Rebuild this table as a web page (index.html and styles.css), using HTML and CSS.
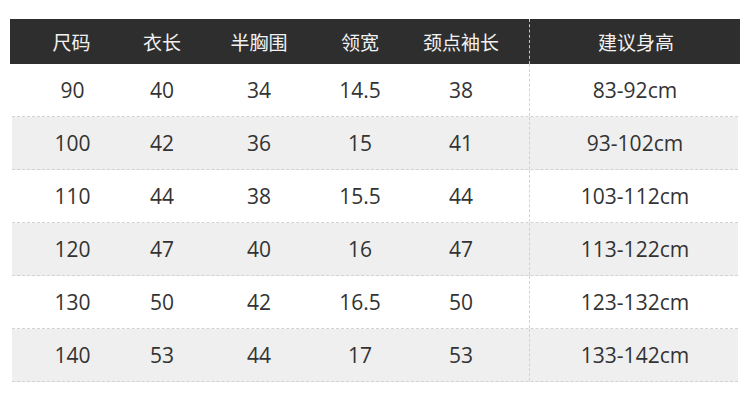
FILE: index.html
```html
<!DOCTYPE html>
<html lang="zh">
<head>
<meta charset="utf-8">
<title>尺码表</title>
<link rel="stylesheet" href="styles.css">
</head>
<body>
<div class="sheet">
  <div class="row head">
    <div class="cell">尺码</div>
    <div class="cell">衣长</div>
    <div class="cell">半胸围</div>
    <div class="cell">领宽</div>
    <div class="cell">颈点袖长</div>
    <div class="cell last">建议身高</div>
  </div>
  <div class="row">
    <div class="cell">90</div><div class="cell">40</div><div class="cell">34</div><div class="cell">14.5</div><div class="cell">38</div><div class="cell last">83-92cm</div>
  </div>
  <div class="row alt">
    <div class="cell">100</div><div class="cell">42</div><div class="cell">36</div><div class="cell">15</div><div class="cell">41</div><div class="cell last">93-102cm</div>
  </div>
  <div class="row">
    <div class="cell">110</div><div class="cell">44</div><div class="cell">38</div><div class="cell">15.5</div><div class="cell">44</div><div class="cell last">103-112cm</div>
  </div>
  <div class="row alt">
    <div class="cell">120</div><div class="cell">47</div><div class="cell">40</div><div class="cell">16</div><div class="cell">47</div><div class="cell last">113-122cm</div>
  </div>
  <div class="row">
    <div class="cell">130</div><div class="cell">50</div><div class="cell">42</div><div class="cell">16.5</div><div class="cell">50</div><div class="cell last">123-132cm</div>
  </div>
  <div class="row alt">
    <div class="cell">140</div><div class="cell">53</div><div class="cell">44</div><div class="cell">17</div><div class="cell">53</div><div class="cell last">133-142cm</div>
  </div>
</div>
</body>
</html>
```

FILE: styles.css
```css
html, body {
  margin: 0;
  padding: 0;
  background: #ffffff;
}

body {
  font-family: "Open Sans", "Noto Sans CJK SC", sans-serif;
  color: #333333;
}

.sheet {
  width: 730px;
  margin: 19px 0 0 10px;
  display: flex;
  flex-direction: column;
}

.row {
  display: grid;
  grid-template-columns: 121px 58px 136px 66px 136px 1fr;
  height: 53px;
  margin: 0 2px;
  border-bottom: 1px dashed #d2d2d2;
  box-sizing: border-box;
  font-size: 21px;
}

.row.alt {
  background: #efefef;
}

.row.head {
  height: 45px;
  margin: 0;
  border-bottom: none;
  background: #2e2e2e;
  color: #f2f2f2;
  font-family: "Noto Sans CJK SC", sans-serif;
  font-size: 19px;
  grid-template-columns: 123px 58px 136px 66px 136px 1fr;
}

.cell {
  display: flex;
  align-items: center;
  justify-content: center;
  white-space: nowrap;
}

.head .cell {
  padding-bottom: 1px;
}

.cell.last {
  border-left: 1px dashed #d2d2d2;
  padding-left: 2px;
}

.head .cell.last {
  border-left-color: #c8c8c8;
}
```
